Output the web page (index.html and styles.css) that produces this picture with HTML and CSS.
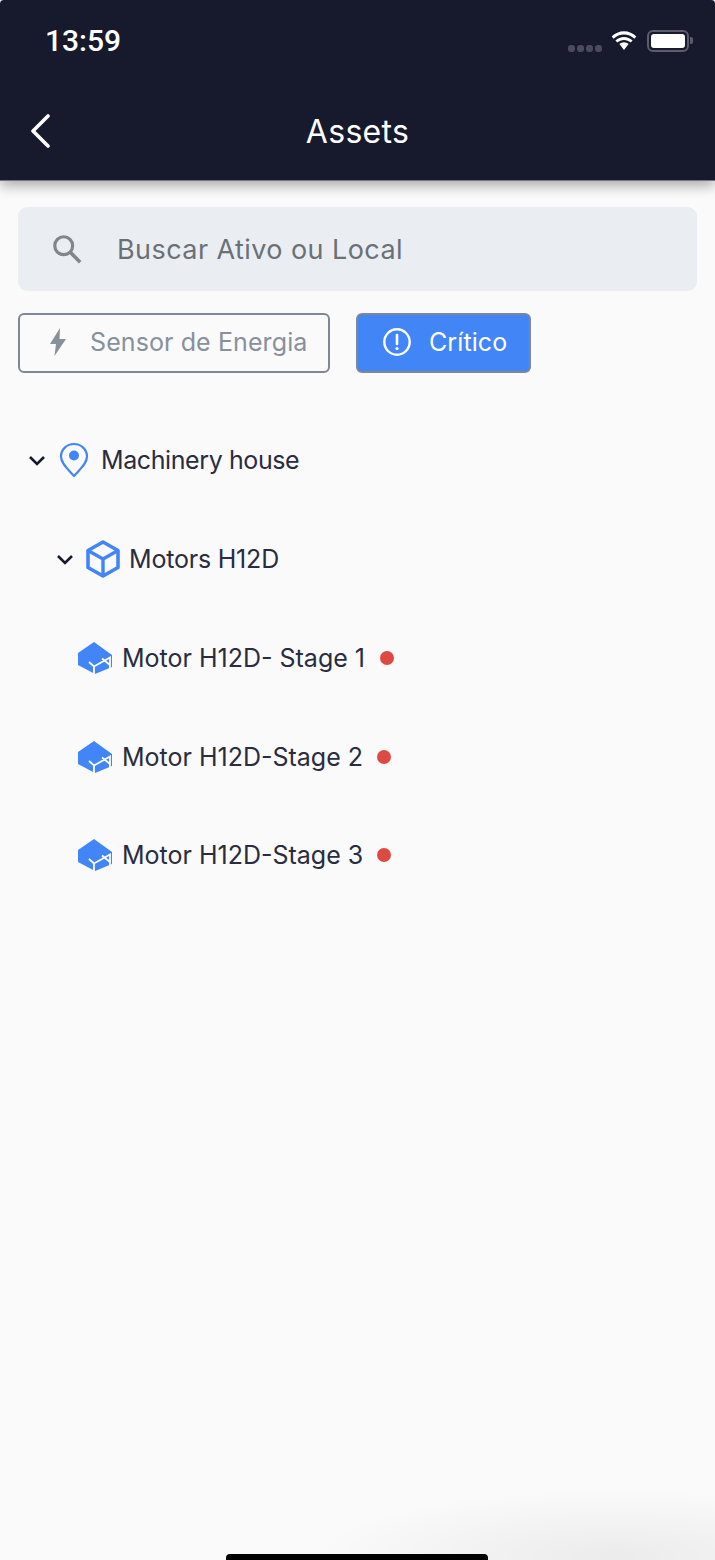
FILE: index.html
```html
<!doctype html>
<html>
<head>
<meta charset="utf-8">
<meta name="viewport" content="width=device-width, initial-scale=1.0">
<link rel="stylesheet" href="styles.css">
<title>Assets</title>
</head>
<body>
<div class="screen">
  <header class="top">
    <div class="status">
      <span class="time">13:59</span>
      <div class="status-icons">
        <span class="signal"><i></i><i></i><i></i><i></i></span>
        <svg class="wifi" width="28" height="21" viewBox="0 0 28 21">
          <path d="M14 4.500c4 0 7.600 1.500 10.400 4.200l2-2.200C23 3.200 18.700 1.200 14 1.200S5 3.200 1.600 6.500l2 2.200C6.400 6 10 4.500 14 4.500z" fill="#fff"/>
          <path d="M14 10c2.500 0 4.800 1 6.600 2.600l2-2.200C20.200 8.200 17.200 6.900 14 6.900s-6.200 1.300-8.600 3.500l2 2.200C9.200 11 11.500 10 14 10z" fill="#fff"/>
          <path d="M14 12.300c-1.700 0-3.300.7-4.600 1.800L14 20l4.600-5.900c-1.300-1.100-2.900-1.800-4.600-1.800z" fill="#fff"/>
        </svg>
        <span class="battery"><b></b></span>
      </div>
    </div>
    <div class="nav">
      <svg class="back" width="22" height="34" viewBox="0 0 22 34">
        <path d="M19 2L4 17l15 15" fill="none" stroke="#fff" stroke-width="3.600" stroke-linecap="round" stroke-linejoin="round"/>
      </svg>
      <h1>Assets</h1>
    </div>
  </header>

  <main class="content">
    <div class="search">
      <svg width="32" height="32" viewBox="0 0 34 34">
        <circle cx="13.500" cy="13.500" r="9.500" fill="none" stroke="#81868b" stroke-width="3.400"/>
        <path d="M20.500 20.500L31 31" fill="none" stroke="#81868b" stroke-width="3.800"/>
      </svg>
      <span>Buscar Ativo ou Local</span>
    </div>

    <div class="filters">
      <div class="chip chip-energy">
        <svg width="16" height="28" viewBox="0 0 16 28">
          <path d="M10 0L0 16h6l-1.500 12L16 11H9.500z" fill="#88909c"/>
        </svg>
        <span>Sensor de Energia</span>
      </div>
      <div class="chip chip-critical">
        <svg width="30" height="30" viewBox="0 0 30 30">
          <circle cx="15" cy="15" r="12.700" fill="none" stroke="#fff" stroke-width="2.400"/>
          <path d="M15 8v9" stroke="#fff" stroke-width="2.600" stroke-linecap="round"/>
          <circle cx="15" cy="21.500" r="1.600" fill="#fff"/>
        </svg>
        <span>Crítico</span>
      </div>
    </div>

    <ul class="tree">
      <li class="row row-location">
        <svg class="caret" width="18" height="11" viewBox="0 0 18 11"><path d="M2 2l7 7 7-7" fill="none" stroke="#17192d" stroke-width="2.600"/></svg>
        <svg class="ic-pin" width="30" height="36" viewBox="0 0 30 36">
          <path d="M15 34C10 28 2 22 2 14.500 2 7.500 7.800 2 15 2s13 5.500 13 12.500C28 22 20 28 15 34z" fill="none" stroke="#4285f7" stroke-width="2.200" stroke-linejoin="round"/>
          <circle cx="15" cy="13.500" r="5" fill="#4285f7"/>
        </svg>
        <span>Machinery house</span>
      </li>
      <li class="row row-asset">
        <svg class="caret" width="18" height="11" viewBox="0 0 18 11"><path d="M2 2l7 7 7-7" fill="none" stroke="#17192d" stroke-width="2.600"/></svg>
        <svg class="ic-box" width="34" height="38" viewBox="0 0 34 38">
          <path d="M17 2l15 8.500v17L17 36 2 27.500v-17z" fill="none" stroke="#4285f7" stroke-width="3.600" stroke-linejoin="round"/>
          <path d="M2 10.500L17 19l15-8.500M17 19v17" fill="none" stroke="#4285f7" stroke-width="3.400"/>
        </svg>
        <span>Motors H12D</span>
      </li>
      <li class="row row-motor">
        <svg class="ic-motor" width="36" height="32" viewBox="0 0 36 32"><use href="#motor"/></svg>
        <span>Motor H12D- Stage 1</span>
        <i class="dot dot-first"></i>
      </li>
      <li class="row row-motor">
        <svg class="ic-motor" width="36" height="32" viewBox="0 0 36 32"><use href="#motor"/></svg>
        <span>Motor H12D-Stage 2</span>
        <i class="dot"></i>
      </li>
      <li class="row row-motor">
        <svg class="ic-motor" width="36" height="32" viewBox="0 0 36 32"><use href="#motor"/></svg>
        <span>Motor H12D-Stage 3</span>
        <i class="dot"></i>
      </li>
    </ul>
  </main>

  <svg class="defs" width="0" height="0">
    <defs>
      <g id="motor">
        <path d="M17 0L35 13V25L18 32 1 23V11z" fill="#4285f7"/>
        <path d="M12 20l5 4.500 16-9V26M17 24.500V32M25 16.500L33 23" fill="none" stroke="#fff" stroke-width="1.800"/>
      </g>
    </defs>
  </svg>

  <div class="corner-shade"></div>
  <div class="home-bar"></div>
</div>
</body>
</html>
```

FILE: styles.css
```css
* {
    box-sizing: border-box;
}
html, body {
    margin: 0;
    padding: 0;
}
body {
    font-family: Inter, "Liberation Sans", sans-serif;
    background-color: #fff;
}
.screen {
    position: relative;
    width: 715px;
    height: 1560px;
    overflow: hidden;
    background-color: #fafafa;
}

/* header */
.top {
    height: 181px;
    background-color: #17192d;
    border-radius: 4px 4px 0 0;
    border-bottom: 1px solid #77787f;
    box-shadow: 0 4px 14px rgba(0, 0, 0, 0.35);
    color: #fff;
}
.status {
    height: 82px;
    padding: 23px 22px 0 45px;
    display: flex;
    justify-content: space-between;
}
.time {
    font-family: Roboto, sans-serif;
    font-size: 30px;
    font-weight: 500;
    line-height: 36px;
}
.status-icons {
    display: flex;
    align-items: flex-start;
    padding-top: 7px;
    padding-right: 4px;
}
.signal {
    display: flex;
    gap: 2px;
    margin-top: 15px;
    margin-right: 8px;
}
.signal i {
    width: 7px;
    height: 7px;
    border-radius: 3px;
    background-color: #4a4b5c;
}
.wifi {
    margin-right: 9px;
}
.battery {
    position: relative;
    width: 42px;
    height: 22px;
    border: 2px solid #5b5c6c;
    border-radius: 6px;
    padding: 2px;
}
.battery b {
    display: block;
    height: 100%;
    background-color: #fff;
    border-radius: 3px;
}
.battery:after {
    content: "";
    position: absolute;
    right: -6px;
    top: 5px;
    width: 3px;
    height: 7px;
    border-radius: 0 2px 2px 0;
    background-color: #5b5c6c;
}
.nav {
    position: relative;
    height: 98px;
    padding-left: 29px;
    padding-top: 32px;
}
.back {
    display: block;
}
.nav h1 {
    position: absolute;
    left: 0;
    right: 0;
    top: 29px;
    margin: 0;
    text-align: center;
    font-size: 32px;
    font-weight: 400;
    letter-spacing: 0.3px;
    line-height: 42px;
}

/* search and filters */
.content {
    padding: 26px 18px 0;
}
.search {
    height: 84px;
    border-radius: 9px;
    background-color: #eaeef3;
    display: flex;
    align-items: center;
    padding-left: 33px;
    color: #6b7076;
    font-size: 27px;
    letter-spacing: 0.43px;
}
.search span {
    margin-left: 34px;
}
.filters {
    display: flex;
    gap: 26px;
    margin-top: 22px;
}
.chip {
    height: 60px;
    border-radius: 6px;
    border: 2px solid #7f8695;
    display: flex;
    align-items: center;
    padding-bottom: 2px;
    font-size: 25px;
    letter-spacing: 0.1px;
}
.chip-energy {
    width: 312px;
    padding-left: 30px;
    color: #88909c;
}
.chip-energy span {
    margin-left: 24px;
}
.chip-critical {
    width: 175px;
    padding-left: 24px;
    color: #fff;
    background-color: #4285f7;
}
.chip-critical span {
    margin-left: 17px;
}

/* tree */
.tree {
    list-style: none;
    margin: 38px 0 0;
    padding: 0;
}
.row {
    height: 98.750px;
    display: flex;
    align-items: center;
    color: #2a2c40;
    font-size: 25px;
}
.row-location {
    padding-left: 10px;
}
.row-location .ic-pin {
    margin-left: 13px;
}
.row-location span {
    margin-left: 12px;
    letter-spacing: -0.4px;
}
.row-asset {
    padding-left: 38px;
}
.row-asset .ic-box {
    margin-left: 12px;
}
.row-asset span {
    margin-left: 9px;
    letter-spacing: -0.2px;
}
.row-motor {
    padding-left: 59px;
}
.row-motor span {
    margin-left: 9px;
}
.dot {
    width: 14px;
    height: 14px;
    border-radius: 50%;
    margin-left: 14px;
    background-color: #dd4b40;
}
.dot-first {
    margin-left: 15px;
}
.defs {
    position: absolute;
}

/* bottom */
.corner-shade {
    position: absolute;
    right: -200px;
    bottom: -60px;
    width: 600px;
    height: 130px;
    background: radial-gradient(closest-side, rgba(0, 0, 0, 0.06), rgba(0, 0, 0, 0));
}
.home-bar {
    position: absolute;
    left: 226px;
    bottom: 0;
    width: 262px;
    height: 6px;
    border-radius: 4px 4px 0 0;
    background-color: #000;
}
```
